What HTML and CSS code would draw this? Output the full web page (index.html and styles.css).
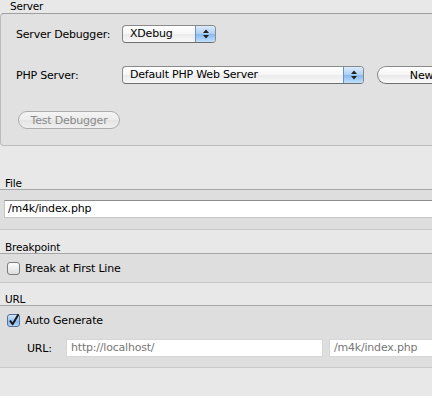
FILE: index.html
```html
<!DOCTYPE html>
<html>
<head>
<title>Debug Configuration</title>
<link rel="stylesheet" href="styles.css">
</head>
<body>
<div class="pane">
  <div class="group-title">Server</div>
  <div class="group">
    <div class="row">
      <span class="label">Server Debugger:</span>
      <div class="popup popup-small">
        <span class="popup-text">XDebug</span>
        <span class="popup-arrows">
          <svg width="6" height="10" viewBox="0 0 6 10"><polygon points="0,4 3,0.5 6,4" fill="#222"/><polygon points="0,6 3,9.5 6,6" fill="#222"/></svg>
        </span>
      </div>
    </div>
    <div class="row row-second">
      <span class="label">PHP Server:</span>
      <div class="popup popup-wide">
        <span class="popup-text">Default PHP Web Server</span>
        <span class="popup-arrows">
          <svg width="6" height="10" viewBox="0 0 6 10"><polygon points="0,4 3,0.5 6,4" fill="#222"/><polygon points="0,6 3,9.5 6,6" fill="#222"/></svg>
        </span>
      </div>
      <button class="pill pill-new">New...</button>
    </div>
    <div class="row row-third">
      <button class="pill pill-disabled">Test Debugger</button>
    </div>
  </div>

  <div class="section-head section-head-file">File</div>
  <div class="section section-file">
    <div class="field field-file">/m4k/index.php</div>
  </div>

  <div class="section-head section-head-tall">Breakpoint</div>
  <div class="section section-check">
    <div class="check-row">
      <svg class="check" width="13" height="13" viewBox="0 0 13 13">
        <defs><linearGradient id="boxoff" x1="0" y1="0" x2="0" y2="1"><stop offset="0" stop-color="#ffffff"/><stop offset="1" stop-color="#dcdcdc"/></linearGradient></defs>
        <rect x="0.5" y="0.5" width="12" height="12" rx="2.5" fill="url(#boxoff)" stroke="#7c7c7c"/>
      </svg>
      <span>Break at First Line</span>
    </div>
  </div>

  <div class="section-head">URL</div>
  <div class="section section-url">
    <div class="check-row">
      <svg class="check" width="13" height="13" viewBox="0 0 13 13">
        <defs><linearGradient id="boxon" x1="0" y1="0" x2="0" y2="1"><stop offset="0" stop-color="#d6e8fb"/><stop offset="0.5" stop-color="#9fc7f1"/><stop offset="0.51" stop-color="#7db3ec"/><stop offset="1" stop-color="#b6dbfb"/></linearGradient></defs>
        <rect x="0.5" y="0.5" width="12" height="12" rx="2.5" fill="url(#boxon)" stroke="#52719c"/>
        <path d="M3 6.5 L5.6 10.2 L11.5 0.2" fill="none" stroke="#1a1a1a" stroke-width="2" stroke-linejoin="round"/>
      </svg>
      <span>Auto Generate</span>
    </div>
    <div class="url-row">
      <span class="url-label">URL:</span>
      <div class="field field-url field-host">http://localhost/</div>
      <div class="field field-url field-path">/m4k/index.php</div>
    </div>
  </div>
</div>
</body>
</html>
```

FILE: styles.css
```css
html, body {
  margin: 0;
  overflow: hidden;
}

body {
  font-family: "DejaVu Sans", sans-serif;
  font-size: 11px;
  letter-spacing: -0.2px;
  color: #000;
  background-color: #e8e8e8;
  height: 396px;
}

.pane {
  width: 480px;
}

.group-title {
  height: 13px;
  padding-left: 10px;
  font-size: 10.5px;
  line-height: 12px;
}

.group {
  background-color: #e1e1e1;
  border: 1px solid #bcbcbc;
  border-top-color: #9e9e9e;
  border-right: none;
  border-radius: 4px 0 0 4px;
  padding: 11px 0 16px 15px;
}

.row {
  display: flex;
  align-items: center;
  height: 18px;
}

.row-second {
  margin-top: 23px;
}

.row-third {
  margin-top: 27px;
  padding-left: 2px;
}

.label {
  width: 106px;
}

.popup {
  display: flex;
  height: 18px;
  box-sizing: border-box;
  border: 1px solid #8a8a8a;
  border-bottom-color: #6e6e6e;
  border-radius: 4px;
  background: linear-gradient(#ffffff, #f6f6f6 50%, #ebebeb 51%, #f8f8f8);
  overflow: hidden;
}

.popup-small {
  width: 94px;
}

.popup-wide {
  width: 242px;
}

.popup-text {
  flex-grow: 1;
  padding-left: 7px;
  line-height: 16px;
}

.popup-arrows {
  width: 19px;
  display: flex;
  align-items: center;
  justify-content: center;
  border-left: 1px solid #6d8fbf;
  background: linear-gradient(#dcebfb, #acd0f4 50%, #86b9ef 51%, #c0e0fc);
}

.pill {
  height: 18px;
  box-sizing: border-box;
  border: 1px solid #8a8a8a;
  border-bottom-color: #707070;
  border-radius: 9px;
  background: linear-gradient(#ffffff, #f5f5f5 50%, #e9e9e9 51%, #fafafa);
  font-family: "DejaVu Sans", sans-serif;
  font-size: 11px;
  letter-spacing: -0.2px;
  color: #000;
  padding: 0;
  line-height: 15px;
}

.pill-new {
  margin-left: 13px;
  width: 98px;
}

.pill-disabled {
  width: 102px;
  color: #8a8a8a;
  border-color: #acacac;
  background: linear-gradient(#f4f4f4, #ececec 50%, #e4e4e4 51%, #efefef);
}

.section-head {
  height: 22px;
  display: flex;
  align-items: flex-end;
  padding: 0 5px;
  font-size: 10.5px;
  line-height: 11px;
  border-bottom: 1px solid #a6a6a6;
}

.section-head-file {
  margin-top: 21px;
}

.section-head-tall {
  height: 23px;
}

.section {
  background-color: #dedede;
  border-bottom: 1px solid #c8c8c8;
}

.section-file {
  padding: 10px 0 11px 4px;
}

.field {
  height: 18px;
  box-sizing: border-box;
  background-color: #fff;
  padding-left: 3px;
  line-height: 16px;
  white-space: nowrap;
}

.field-file {
  border: 1px solid #c4c4c4;
  border-top-color: #8c8c8c;
  border-right: none;
}

.section-check {
  padding: 7px 7px;
}

.check-row {
  display: flex;
  align-items: center;
  height: 14px;
}

.check {
  margin-right: 5px;
  overflow: visible;
}

.section-url {
  padding: 7px 0 10px 7px;
}

.url-row {
  display: flex;
  align-items: center;
  margin-top: 12px;
  padding-left: 20px;
}

.url-label {
  width: 39px;
}

.field-url {
  border: 1px solid #d6d6d6;
  color: #777;
  padding-left: 4px;
}

.field-host {
  width: 257px;
}

.field-path {
  margin-left: 6px;
  width: 140px;
}
```
